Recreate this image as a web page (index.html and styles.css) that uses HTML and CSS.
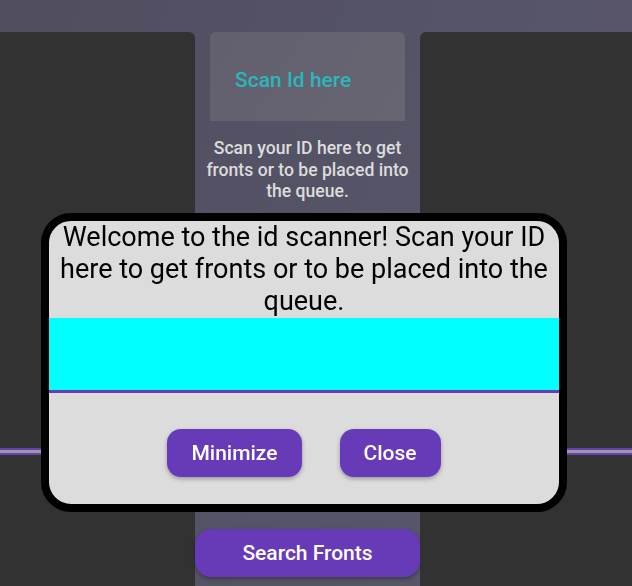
FILE: index.html
```
<!DOCTYPE html>
<html lang="en">
<head>
<meta charset="utf-8">
<title>ID Scanner</title>
<link rel="stylesheet" href="styles.css">
</head>
<body>
<div class="page">
  <aside class="side side-left">
    <div class="divider"></div>
  </aside>
  <main class="center">
    <div class="scan-card">
      <span class="scan-title">Scan Id here</span>
    </div>
    <p class="scan-desc">Scan your ID here to get fronts or to be placed into the queue.</p>
    <button class="btn btn-search" type="button">Search Fronts</button>
  </main>
  <aside class="side side-right">
    <div class="divider"></div>
  </aside>
</div>

<div class="modal">
  <h2 class="modal-title">Welcome to the id scanner! Scan your ID here to get fronts or to be placed into the queue.</h2>
  <div class="modal-input"></div>
  <div class="modal-actions">
    <button class="btn btn-modal" type="button">Minimize</button>
    <button class="btn btn-modal" type="button">Close</button>
  </div>
</div>
</body>
</html>
```

FILE: styles.css
```
* {
  box-sizing: border-box;
}

html, body {
  margin: 0;
  height: 100%;
}

body {
  font-family: Roboto, "Liberation Sans", sans-serif;
  background: linear-gradient(110deg, #4f4d5e 0%, #555366 50%, #5a586a 100%);
  overflow: hidden;
}

.page {
  height: 100vh;
  padding-top: 32px;
  display: grid;
  grid-template-columns: 195px 225px 1fr;
}

.side {
  background: #323232;
}

.side-left {
  border-top-right-radius: 6px;
}

.side-right {
  border-top-left-radius: 6px;
}

.divider {
  margin-top: 416px;
  height: 7px;
  background: #9c9ba2;
  border-top: 2px solid #6a3fb3;
  border-bottom: 2px solid #6a3fb3;
}

.center {
  display: flex;
  flex-direction: column;
  align-items: center;
  padding: 0 15px;
}

.scan-card {
  align-self: stretch;
  height: 89px;
  background: linear-gradient(120deg, #62606e, #676572);
  border-radius: 6px 6px 0 0;
  padding: 36px 0 0 25px;
}

.scan-title {
  font-size: 21px;
  font-weight: 500;
  color: #2ab7b9;
}

.scan-desc {
  margin: 17px -12px 0;
  font-size: 17.6px;
  line-height: 21.5px;
  font-weight: 500;
  color: #dcdcdc;
  text-align: center;
}

.btn {
  border: none;
  background: #673ab7;
  color: #fff;
  font-family: Roboto, "Liberation Sans", sans-serif;
  font-weight: 500;
  font-size: 21px;
  box-shadow: 0 2px 4px rgba(0, 0, 0, 0.3);
  cursor: pointer;
}

.btn-search {
  margin: auto -15px 9px -15px;
  align-self: stretch;
  height: 48px;
  border-radius: 16px;
}

.modal {
  position: fixed;
  left: 41px;
  top: 213px;
  width: 526px;
  height: 299px;
  border: 8px solid #000;
  border-radius: 30px;
  background: #dcdcdc;
  overflow: hidden;
  display: flex;
  flex-direction: column;
}

.modal-title {
  margin: 0 0 1px;
  font-size: 27px;
  line-height: 32px;
  font-weight: 400;
  color: #000;
  text-align: center;
}

.modal-input {
  flex: none;
  height: 75px;
  background: #00ffff;
  border-bottom: 3px solid #673ab7;
}

.modal-actions {
  margin-top: 36px;
  display: flex;
  justify-content: center;
  gap: 38px;
}

.btn-modal {
  height: 48px;
  padding: 0 24px;
  border-radius: 14px;
}
```
